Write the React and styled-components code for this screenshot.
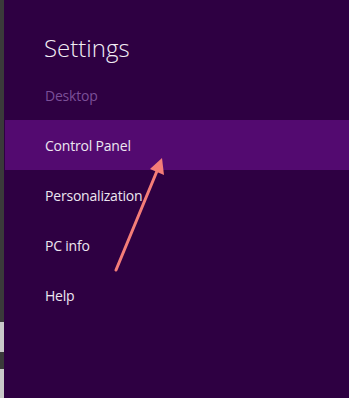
import { createGlobalStyle, styled } from 'styled-components'

const GlobalStyle = createGlobalStyle`
  html, body {
    margin: 0;
    padding: 0;
    background: #2e0042;
  }
  body {
    font-family: "Open Sans", "Noto Sans", sans-serif;
  }
`

const Screen = styled.div`
  display: flex;
  width: 349px;
  height: 398px;
  overflow: hidden;
  position: relative;
`

const Edge = styled.div`
  width: 4px;
  display: flex;
  flex-direction: column;
`

const EdgePart = styled.div`
  height: ${(p) => p.h}px;
  flex: ${(p) => (p.grow ? 1 : 'none')};
  background: ${(p) => (p.light ? '#c9c9c9' : '#3a3a3a')};
`

const Charm = styled.div`
  flex: 1;
  background: #2e0042;
  display: flex;
  flex-direction: column;
`

const Title = styled.h1`
  margin: 0;
  padding: 31px 0 0 40px;
  height: 39px;
  font-size: 24px;
  font-weight: 300;
  color: #f2eef5;
`

const Item = styled.div`
  height: 50px;
  display: flex;
  align-items: center;
  padding-left: ${(p) => (p.active ? 40 : 41)}px;
  margin-left: ${(p) => (p.active ? 1 : 0)}px;
  font-size: 14px;
  letter-spacing: -0.2px;
  color: ${(p) => (p.muted ? '#7b4f98' : '#ece6f0')};
  background: ${(p) => (p.active ? '#530a70' : 'transparent')};
`

const Arrow = styled.svg`
  position: absolute;
  left: 0;
  top: 0;
  pointer-events: none;
`

export default function App() {
  return (
    <>
      <GlobalStyle />
      <Screen>
        <Edge>
          <EdgePart grow />
          <EdgePart light h={30} />
          <EdgePart h={17} />
          <EdgePart light h={29} />
        </Edge>
        <Charm>
          <Title>Settings</Title>
          <Item muted>Desktop</Item>
          <Item active>Control Panel</Item>
          <Item>Personalization</Item>
          <Item>PC info</Item>
          <Item>Help</Item>
        </Charm>
        <Arrow width="349" height="398" viewBox="0 0 349 398">
          <line x1="116" y1="270" x2="157" y2="171" stroke="#f47d78" strokeWidth="3" strokeLinecap="round" />
          <polygon points="162,158 164,175 150,169" fill="#f47d78" />
        </Arrow>
      </Screen>
    </>
  )
}
